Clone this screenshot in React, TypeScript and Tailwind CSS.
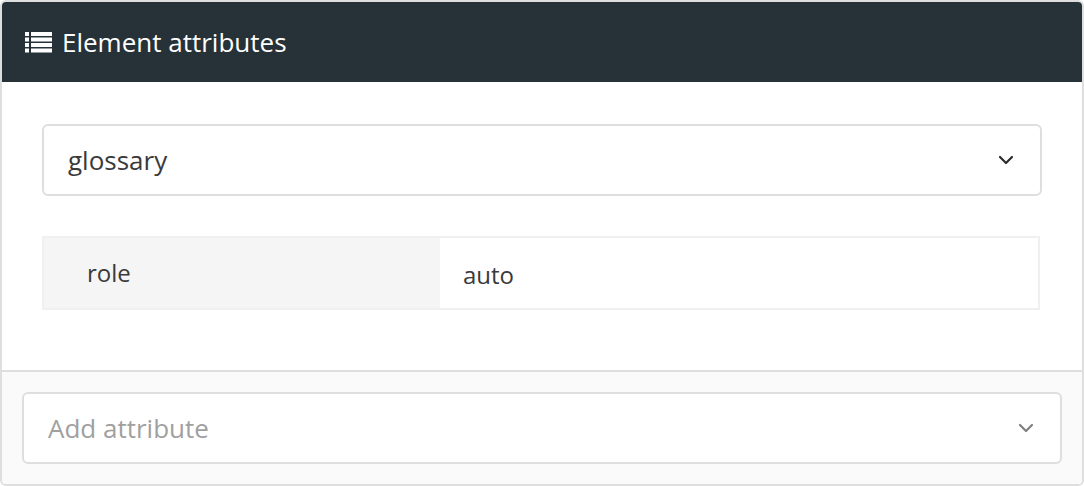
import { ChevronDown } from "lucide-react";

function ListIcon() {
  return (
    <svg width="27" height="21" viewBox="0 0 27 21" fill="#fff" className="mr-[10px] shrink-0">
      <rect x="0" y="0" width="4" height="4" />
      <rect x="6" y="0" width="21" height="4" />
      <rect x="0" y="5.5" width="4" height="4" />
      <rect x="6" y="5.5" width="21" height="4" />
      <rect x="0" y="11" width="4" height="4" />
      <rect x="6" y="11" width="21" height="4" />
      <rect x="0" y="16.5" width="4" height="4" />
      <rect x="6" y="16.5" width="21" height="4" />
    </svg>
  );
}

function SelectBox({
  label,
  muted,
  className,
}: {
  label: string;
  muted?: boolean;
  className: string;
}) {
  return (
    <div
      className={`flex h-[72px] items-center justify-between rounded-[6px] border-2 border-[#dedede] bg-white pl-6 pr-[22px] text-[26px] ${
        muted ? "text-[#a0a0a0]" : "text-[#3a3a3a]"
      } ${className}`}
    >
      <span>{label}</span>
      <ChevronDown
        size={24}
        strokeWidth={2.2}
        className={muted ? "text-[#808080]" : "text-[#2b2b2b]"}
      />
    </div>
  );
}

export default function App() {
  return (
    <div className="flex h-[486px] w-[1084px] flex-col overflow-hidden rounded-[6px] border-2 border-[#dedede] bg-white font-['Open_Sans',sans-serif]">
      <div className="flex h-[80px] shrink-0 items-center bg-[#263238] pl-[23px] text-[26px] text-white">
        <ListIcon />
        <span>Element attributes</span>
      </div>
      <div className="flex flex-1 flex-col px-10 pt-[42px]">
        <SelectBox label="glossary" className="w-[1000px]" />
        <div className="mt-[40px] flex h-[74px] w-[998px] border-2 border-[#f0f0f0] text-[24px] text-[#3a3a3a]">
          <div className="flex w-[396px] items-center bg-[#f5f5f5] pl-[43px]">role</div>
          <div className="flex flex-1 items-center pl-[23px] pt-[4px]">auto</div>
        </div>
      </div>
      <div className="h-[114px] shrink-0 border-t-2 border-[#dedede] bg-[#fafafa] px-5 pt-5">
        <SelectBox label="Add attribute" muted className="w-[1040px]" />
      </div>
    </div>
  );
}
